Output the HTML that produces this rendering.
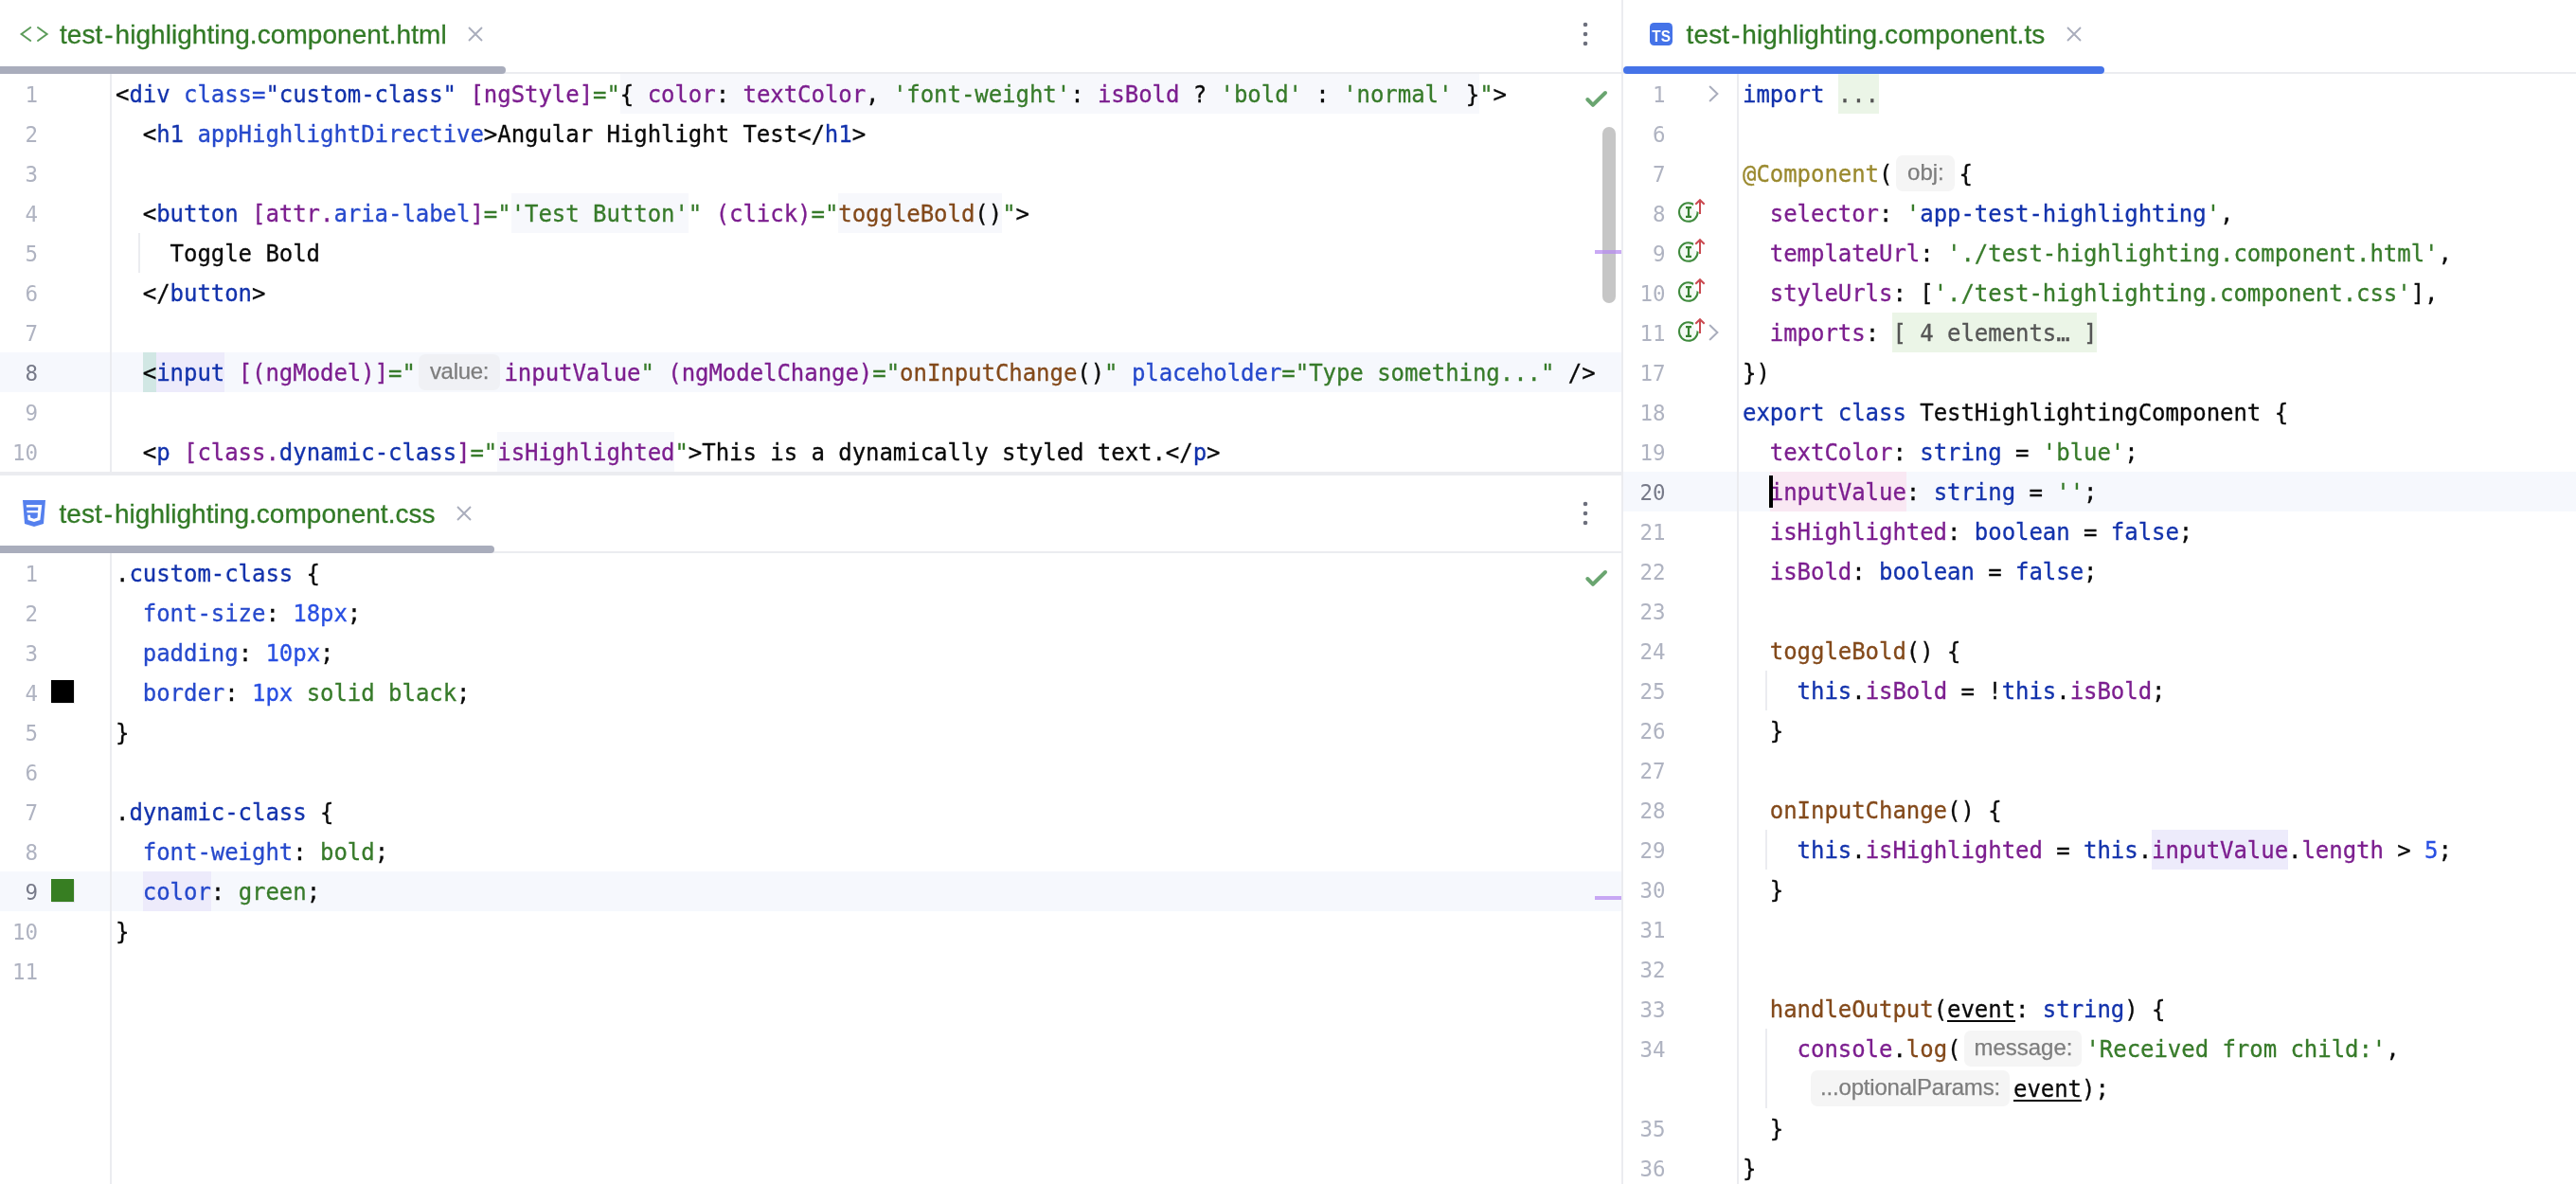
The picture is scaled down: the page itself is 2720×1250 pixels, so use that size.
<!DOCTYPE html>
<html lang="en"><head><meta charset="utf-8"><title>test-highlighting</title>
<style>
html,body{margin:0;padding:0}
body{width:2720px;height:1250px;position:relative;overflow:hidden;background:#fff;color:#080808}
.abs,.cl,.ln,.curline,.tabtext,.g{position:absolute}
.cl{height:42px;line-height:44px;white-space:pre;font-family:"DejaVu Sans Mono","Liberation Mono",monospace;font-size:24px;letter-spacing:-0.049px;color:#080808;-webkit-text-stroke:0.3px}
.cl span{display:inline-block;height:42px;line-height:44px;vertical-align:top}
.ln{width:80px;height:42px;line-height:42px;text-align:right;white-space:pre;font-family:"DejaVu Sans Mono","Liberation Mono",monospace;font-size:22.5px;letter-spacing:-0.05px;color:#afb3c1}
.ln.cur{color:#777a89}
.curline{height:42px;background:#f6f8fd}
.k{color:#1232ac}.a{color:#2649cc}.p{color:#7c1e8f}.s{color:#377b2a}.f{color:#83491a}.n{color:#284fe2}.d{color:#9a892e}
.u{text-decoration:underline;text-decoration-thickness:2px;text-underline-offset:3px}
.inj{background:#f7f8fc}.lav{background:#edebfb}.teal{background:#d1e7e4}.pink{background:#f9e8f3}.fold{background:#ebf5e7;color:#555}
.cl span.hint{height:38px;line-height:36px;margin:2px 4px 0 4px;border-radius:7px;background:#f5f5f5;color:#7d7d7d;font-family:"Liberation Sans",sans-serif;font-size:24px;letter-spacing:0;-webkit-text-stroke:0.25px;text-align:center;box-sizing:border-box}
.tabtext{height:44px;line-height:44px;white-space:pre;font-family:"Liberation Sans",sans-serif;font-size:28px;letter-spacing:0.13px;color:#327a26;-webkit-text-stroke:0.3px #327a26}
.hy{margin:0 1.9px}
.g{background:#ebecf0}
#root{position:absolute;left:0;top:0;width:2720px;height:1250px;will-change:transform}
</style></head>
<body>
<div id="root">
<div class="g" style="left:1712px;top:0;width:2px;height:1250px"></div>
<div class="g" style="left:0;top:498px;width:1712px;height:4px"></div>
<div class="g" style="left:0;top:76px;width:1712px;height:2px"></div>
<div class="g" style="left:0;top:582px;width:1712px;height:2px"></div>
<div class="g" style="left:1714px;top:76px;width:1006px;height:2px"></div>
<div class="abs" style="left:0;top:78px;width:1712px;height:420px;overflow:hidden">
<div class="curline" style="left:0px;top:294px;width:1712px"></div>
<div class="ln" style="left:-40px;top:1px">1</div>
<div class="cl" style="left:122px;top:0px">&lt;<span class="k">div</span> <span class="a">class=</span><span class="k">"custom-class"</span> <span class="p">[ngStyle]</span><span class="s">="</span><span class="inj">{ </span><span class="p inj">color</span><span class="inj">: </span><span class="p inj">textColor</span><span class="inj">, </span><span class="s inj">'font-weight'</span><span class="inj">: </span><span class="p inj">isBold</span><span class="inj"> ? </span><span class="s inj">'bold'</span><span class="inj"> : </span><span class="s inj">'normal'</span><span class="inj"> }</span><span class="s">"</span>&gt;</div>
<div class="ln" style="left:-40px;top:43px">2</div>
<div class="cl" style="left:122px;top:42px">  &lt;<span class="k">h1</span> <span class="a">appHighlightDirective</span>&gt;Angular Highlight Test&lt;/<span class="k">h1</span>&gt;</div>
<div class="ln" style="left:-40px;top:85px">3</div>
<div class="ln" style="left:-40px;top:127px">4</div>
<div class="cl" style="left:122px;top:126px">  &lt;<span class="k">button</span> <span class="p">[attr.</span><span class="a">aria-label</span><span class="p">]</span><span class="s">="</span><span class="s inj">'Test Button'</span><span class="s">"</span> <span class="p">(click)</span><span class="s">="</span><span class="f inj">toggleBold</span><span class="inj">()</span><span class="s">"</span>&gt;</div>
<div class="ln" style="left:-40px;top:169px">5</div>
<div class="cl" style="left:122px;top:168px">    Toggle Bold</div>
<div class="ln" style="left:-40px;top:211px">6</div>
<div class="cl" style="left:122px;top:210px">  &lt;/<span class="k">button</span>&gt;</div>
<div class="ln" style="left:-40px;top:253px">7</div>
<div class="ln cur" style="left:-40px;top:295px">8</div>
<div class="cl" style="left:122px;top:294px">  <span class="teal">&lt;</span><span class="k lav">input</span> <span class="p">[(ngModel)]</span><span class="s">="</span><span class="hint" style="width:86px;margin-left:3.2px;margin-right:4.4px;background:#f0f1f5;letter-spacing:-0.3px">value:</span><span class="p">inputValue</span><span class="s">"</span> <span class="p">(ngModelChange)</span><span class="s">="</span><span class="f">onInputChange</span>()<span class="s">"</span> <span class="a">placeholder</span><span class="s">="Type something..."</span> /&gt;</div>
<div class="ln" style="left:-40px;top:337px">9</div>
<div class="ln" style="left:-40px;top:379px">10</div>
<div class="cl" style="left:122px;top:378px">  &lt;<span class="k">p</span> <span class="p">[class.</span><span class="k">dynamic-class</span><span class="p">]</span><span class="s">="</span><span class="p inj">isHighlighted</span><span class="s">"</span>&gt;This is a dynamically styled text.&lt;/<span class="k">p</span>&gt;</div>
<div class="g" style="left:116px;top:0;width:2px;height:420px"></div>
<div class="g" style="left:146px;top:168px;width:2px;height:42px"></div>
</div>
<div class="abs" style="left:0;top:584px;width:1712px;height:666px;overflow:hidden">
<div class="curline" style="left:0px;top:336px;width:1712px"></div>
<div class="ln" style="left:-40px;top:1px">1</div>
<div class="cl" style="left:122px;top:0px">.<span class="k">custom-class</span> {</div>
<div class="ln" style="left:-40px;top:43px">2</div>
<div class="cl" style="left:122px;top:42px">  <span class="a">font-size</span>: <span class="n">18</span><span class="n">px</span>;</div>
<div class="ln" style="left:-40px;top:85px">3</div>
<div class="cl" style="left:122px;top:84px">  <span class="a">padding</span>: <span class="n">10</span><span class="n">px</span>;</div>
<div class="ln" style="left:-40px;top:127px">4</div>
<div class="cl" style="left:122px;top:126px">  <span class="a">border</span>: <span class="n">1</span><span class="n">px</span> <span class="s">solid</span> <span class="s">black</span>;</div>
<div class="ln" style="left:-40px;top:169px">5</div>
<div class="cl" style="left:122px;top:168px">}</div>
<div class="ln" style="left:-40px;top:211px">6</div>
<div class="ln" style="left:-40px;top:253px">7</div>
<div class="cl" style="left:122px;top:252px">.<span class="k">dynamic-class</span> {</div>
<div class="ln" style="left:-40px;top:295px">8</div>
<div class="cl" style="left:122px;top:294px">  <span class="a">font-weight</span>: <span class="s">bold</span>;</div>
<div class="ln cur" style="left:-40px;top:337px">9</div>
<div class="cl" style="left:122px;top:336px">  <span class="a lav">color</span>: <span class="s">green</span>;</div>
<div class="ln" style="left:-40px;top:379px">10</div>
<div class="cl" style="left:122px;top:378px">}</div>
<div class="ln" style="left:-40px;top:421px">11</div>
<div class="g" style="left:116px;top:0;width:2px;height:666px"></div>
<div class="abs" style="left:54px;top:134px;width:24px;height:24px;background:#000;box-shadow:1px 1px 0 #ebebeb"></div>
<div class="abs" style="left:54px;top:344px;width:24px;height:24px;background:#377e22;box-shadow:1px 1px 0 #e4e6ea"></div>
</div>
<div class="abs" style="left:1714px;top:78px;width:1006px;height:1172px;overflow:hidden">
<div class="curline" style="left:0px;top:420px;width:1006px"></div>
<div class="ln" style="left:-35.5px;top:1px">1</div>
<div class="cl" style="left:126px;top:0px"><span class="k">import</span> <span class="fold">...</span></div>
<div class="ln" style="left:-35.5px;top:43px">6</div>
<div class="ln" style="left:-35.5px;top:85px">7</div>
<div class="cl" style="left:126px;top:84px"><span class="d">@Component</span>(<span class="hint" style="width:62px;">obj:</span>{</div>
<div class="ln" style="left:-35.5px;top:127px">8</div>
<div class="cl" style="left:126px;top:126px">  <span class="p">selector</span>: <span class="s">'</span><span class="k">app-test-highlighting</span><span class="s">'</span>,</div>
<div class="ln" style="left:-35.5px;top:169px">9</div>
<div class="cl" style="left:126px;top:168px">  <span class="p">templateUrl</span>: <span class="s">'./test-highlighting.component.html'</span>,</div>
<div class="ln" style="left:-35.5px;top:211px">10</div>
<div class="cl" style="left:126px;top:210px">  <span class="p">styleUrls</span>: [<span class="s">'./test-highlighting.component.css'</span>],</div>
<div class="ln" style="left:-35.5px;top:253px">11</div>
<div class="cl" style="left:126px;top:252px">  <span class="p">imports</span>: <span class="fold">[ 4 elements… ]</span></div>
<div class="ln" style="left:-35.5px;top:295px">17</div>
<div class="cl" style="left:126px;top:294px">})</div>
<div class="ln" style="left:-35.5px;top:337px">18</div>
<div class="cl" style="left:126px;top:336px"><span class="k">export</span> <span class="k">class</span> TestHighlightingComponent {</div>
<div class="ln" style="left:-35.5px;top:379px">19</div>
<div class="cl" style="left:126px;top:378px">  <span class="p">textColor</span>: <span class="k">string</span> = <span class="s">'blue'</span>;</div>
<div class="ln cur" style="left:-35.5px;top:421px">20</div>
<div class="cl" style="left:126px;top:420px">  <span class="p pink">inputValue</span>: <span class="k">string</span> = <span class="s">''</span>;</div>
<div class="ln" style="left:-35.5px;top:463px">21</div>
<div class="cl" style="left:126px;top:462px">  <span class="p">isHighlighted</span>: <span class="k">boolean</span> = <span class="k">false</span>;</div>
<div class="ln" style="left:-35.5px;top:505px">22</div>
<div class="cl" style="left:126px;top:504px">  <span class="p">isBold</span>: <span class="k">boolean</span> = <span class="k">false</span>;</div>
<div class="ln" style="left:-35.5px;top:547px">23</div>
<div class="ln" style="left:-35.5px;top:589px">24</div>
<div class="cl" style="left:126px;top:588px">  <span class="f">toggleBold</span>() {</div>
<div class="ln" style="left:-35.5px;top:631px">25</div>
<div class="cl" style="left:126px;top:630px">    <span class="k">this</span>.<span class="p">isBold</span> = !<span class="k">this</span>.<span class="p">isBold</span>;</div>
<div class="ln" style="left:-35.5px;top:673px">26</div>
<div class="cl" style="left:126px;top:672px">  }</div>
<div class="ln" style="left:-35.5px;top:715px">27</div>
<div class="ln" style="left:-35.5px;top:757px">28</div>
<div class="cl" style="left:126px;top:756px">  <span class="f">onInputChange</span>() {</div>
<div class="ln" style="left:-35.5px;top:799px">29</div>
<div class="cl" style="left:126px;top:798px">    <span class="k">this</span>.<span class="p">isHighlighted</span> = <span class="k">this</span>.<span class="p lav">inputValue</span>.<span class="p">length</span> &gt; <span class="n">5</span>;</div>
<div class="ln" style="left:-35.5px;top:841px">30</div>
<div class="cl" style="left:126px;top:840px">  }</div>
<div class="ln" style="left:-35.5px;top:883px">31</div>
<div class="ln" style="left:-35.5px;top:925px">32</div>
<div class="ln" style="left:-35.5px;top:967px">33</div>
<div class="cl" style="left:126px;top:966px">  <span class="f">handleOutput</span>(<span class="u">event</span>: <span class="k">string</span>) {</div>
<div class="ln" style="left:-35.5px;top:1009px">34</div>
<div class="cl" style="left:126px;top:1008px">    <span class="p">console</span>.<span class="f">log</span>(<span class="hint" style="width:124px;">message:</span><span class="s">'Received from child:'</span>,</div>
<div class="cl" style="left:126px;top:1050px">     <span class="hint" style="width:210px;margin-left:0;margin-right:4px;letter-spacing:-0.2px">...optionalParams:</span><span class="u">event</span>);</div>
<div class="ln" style="left:-35.5px;top:1093px">35</div>
<div class="cl" style="left:126px;top:1092px">  }</div>
<div class="ln" style="left:-35.5px;top:1135px">36</div>
<div class="cl" style="left:126px;top:1134px">}</div>
<div class="g" style="left:120px;top:0;width:2px;height:1172px"></div>
<div class="g" style="left:150px;top:630px;width:2px;height:42px"></div>
<div class="g" style="left:150px;top:798px;width:2px;height:42px"></div>
<div class="g" style="left:150px;top:1008px;width:2px;height:84px"></div>
<div class="abs" style="left:154px;top:424px;width:4px;height:34px;background:#000"></div>
</div>
<div class="tabtext" style="left:63px;top:15px;letter-spacing:0.055px">test<span class="hy">-</span>highlighting.component.html</div>
<svg class="abs" style="left:492px;top:26px" width="20" height="20" viewBox="0 0 20 20"><path d="M3 3 L17 17 M17 3 L3 17" stroke="#a9adbc" stroke-width="1.9" fill="none"/></svg>
<div class="abs" style="left:0px;top:70px;width:534px;height:8px;background:#a9adbc;border-radius:0 4px 4px 0"></div>
<svg class="abs" style="left:16px;top:22px" width="40" height="28" viewBox="16 22 40 28"><path d="M32.2 29 L22.6 36 L32.2 43 M40 29 L49.6 36 L40 43" stroke="#5c9c5a" stroke-width="2" stroke-linecap="round" stroke-linejoin="miter" fill="none"/></svg>
<div class="tabtext" style="left:62.5px;top:521px;letter-spacing:0.035px">test<span class="hy">-</span>highlighting.component.css</div>
<svg class="abs" style="left:480px;top:532px" width="20" height="20" viewBox="0 0 20 20"><path d="M3 3 L17 17 M17 3 L3 17" stroke="#a9adbc" stroke-width="1.9" fill="none"/></svg>
<div class="abs" style="left:0px;top:576px;width:522px;height:8px;background:#a9adbc;border-radius:0 4px 4px 0"></div>
<svg class="abs" style="left:20px;top:524px" width="32" height="36" viewBox="20 524 32 36"><path d="M24 528 L48 528 L46 553 L36 556 L26 553 Z" fill="#5580ee"/><path d="M27.8 533 L44.2 533 L42.4 549 L36 551 L29.6 549 L29.1 543.8 L32 543.8 L32.2 546.6 L36 547.8 L39.5 546.6 L39.8 543.8 L39.9 541.3 L28.6 541.3 L28.4 539 L40.1 539 L40.3 535.6 L28 535.6 Z" fill="#fff"/></svg>
<div class="tabtext" style="left:1780.6px;top:15px;letter-spacing:0.1px">test<span class="hy">-</span>highlighting.component.ts</div>
<svg class="abs" style="left:2180px;top:26px" width="20" height="20" viewBox="0 0 20 20"><path d="M3 3 L17 17 M17 3 L3 17" stroke="#a9adbc" stroke-width="1.9" fill="none"/></svg>
<div class="abs" style="left:1714px;top:70px;width:508px;height:8px;background:#4573e8;border-radius:4px"></div>
<svg class="abs" style="left:1742px;top:24px" width="24" height="24" viewBox="0 0 24 24"><rect width="24" height="24" rx="4.5" fill="#4573e8"/><text x="12.1" y="20" text-anchor="middle" font-family="Liberation Sans, sans-serif" font-weight="bold" font-size="16.6" textLength="19.6" lengthAdjust="spacingAndGlyphs" fill="#fff">TS</text></svg>
<svg class="abs" style="left:1670px;top:20px" width="8" height="32" viewBox="0 0 8 32"><circle cx="4" cy="6" r="2.3" fill="#6d707d"/><circle cx="4" cy="16" r="2.3" fill="#6d707d"/><circle cx="4" cy="26" r="2.3" fill="#6d707d"/></svg>
<svg class="abs" style="left:1670px;top:526px" width="8" height="32" viewBox="0 0 8 32"><circle cx="4" cy="6" r="2.3" fill="#6d707d"/><circle cx="4" cy="16" r="2.3" fill="#6d707d"/><circle cx="4" cy="26" r="2.3" fill="#6d707d"/></svg>
<svg class="abs" style="left:1670px;top:90px" width="32" height="32" viewBox="1670 90 32 32"><path d="M1676.3 105 L1682 110.8 L1695 98" stroke="#6aa570" stroke-width="4" stroke-linecap="round" stroke-linejoin="round" fill="none"/></svg>
<svg class="abs" style="left:1670px;top:596px" width="32" height="32" viewBox="1670 90 32 32"><path d="M1676.3 105 L1682 110.8 L1695 98" stroke="#6aa570" stroke-width="4" stroke-linecap="round" stroke-linejoin="round" fill="none"/></svg>
<div class="abs" style="left:1692px;top:134px;width:14px;height:186px;border-radius:7px;background:#c6c6c6"></div>
<div class="abs" style="left:1684px;top:264px;width:28px;height:4px;background:rgba(183,140,240,.75)"></div>
<div class="abs" style="left:1684px;top:946px;width:28px;height:4px;background:rgba(183,140,240,.75)"></div>
<svg class="abs" style="left:1770px;top:204px" width="36" height="42" viewBox="1770 204 36 42">
<circle cx="1782.8" cy="224" r="9.8" fill="#f3faf3" stroke="#3e8a3c" stroke-width="2"/>
<circle cx="1795" cy="217" r="7.2" fill="#fff"/>
<path d="M1780 219.2 h6 M1780 228.8 h6 M1783 219.2 v9.6" stroke="#35812f" stroke-width="2.2" fill="none"/>
<path d="M1795 226 V212 M1790.3 215.8 L1795 211.2 L1799.7 215.8" stroke="#ca4950" stroke-width="2" fill="none" stroke-linejoin="miter"/>
</svg>
<svg class="abs" style="left:1770px;top:246px" width="36" height="42" viewBox="1770 246 36 42">
<circle cx="1782.8" cy="266" r="9.8" fill="#f3faf3" stroke="#3e8a3c" stroke-width="2"/>
<circle cx="1795" cy="259" r="7.2" fill="#fff"/>
<path d="M1780 261.2 h6 M1780 270.8 h6 M1783 261.2 v9.6" stroke="#35812f" stroke-width="2.2" fill="none"/>
<path d="M1795 268 V254 M1790.3 257.8 L1795 253.2 L1799.7 257.8" stroke="#ca4950" stroke-width="2" fill="none" stroke-linejoin="miter"/>
</svg>
<svg class="abs" style="left:1770px;top:288px" width="36" height="42" viewBox="1770 288 36 42">
<circle cx="1782.8" cy="308" r="9.8" fill="#f3faf3" stroke="#3e8a3c" stroke-width="2"/>
<circle cx="1795" cy="301" r="7.2" fill="#fff"/>
<path d="M1780 303.2 h6 M1780 312.8 h6 M1783 303.2 v9.6" stroke="#35812f" stroke-width="2.2" fill="none"/>
<path d="M1795 310 V296 M1790.3 299.8 L1795 295.2 L1799.7 299.8" stroke="#ca4950" stroke-width="2" fill="none" stroke-linejoin="miter"/>
</svg>
<svg class="abs" style="left:1770px;top:330px" width="36" height="42" viewBox="1770 330 36 42">
<circle cx="1782.8" cy="350" r="9.8" fill="#f3faf3" stroke="#3e8a3c" stroke-width="2"/>
<circle cx="1795" cy="343" r="7.2" fill="#fff"/>
<path d="M1780 345.2 h6 M1780 354.8 h6 M1783 345.2 v9.6" stroke="#35812f" stroke-width="2.2" fill="none"/>
<path d="M1795 352 V338 M1790.3 341.8 L1795 337.2 L1799.7 341.8" stroke="#ca4950" stroke-width="2" fill="none" stroke-linejoin="miter"/>
</svg>
<svg class="abs" style="left:1800px;top:78px" width="20" height="42" viewBox="1800 78 20 42"><path d="M1805.6 91.6 L1813.4 99 L1805.6 106.4" stroke="#a9adbc" stroke-width="2" fill="none" stroke-linecap="round"/></svg>
<svg class="abs" style="left:1800px;top:330px" width="20" height="42" viewBox="1800 330 20 42"><path d="M1805.6 343.6 L1813.4 351 L1805.6 358.4" stroke="#a9adbc" stroke-width="2" fill="none" stroke-linecap="round"/></svg>
</div>
</body></html>
